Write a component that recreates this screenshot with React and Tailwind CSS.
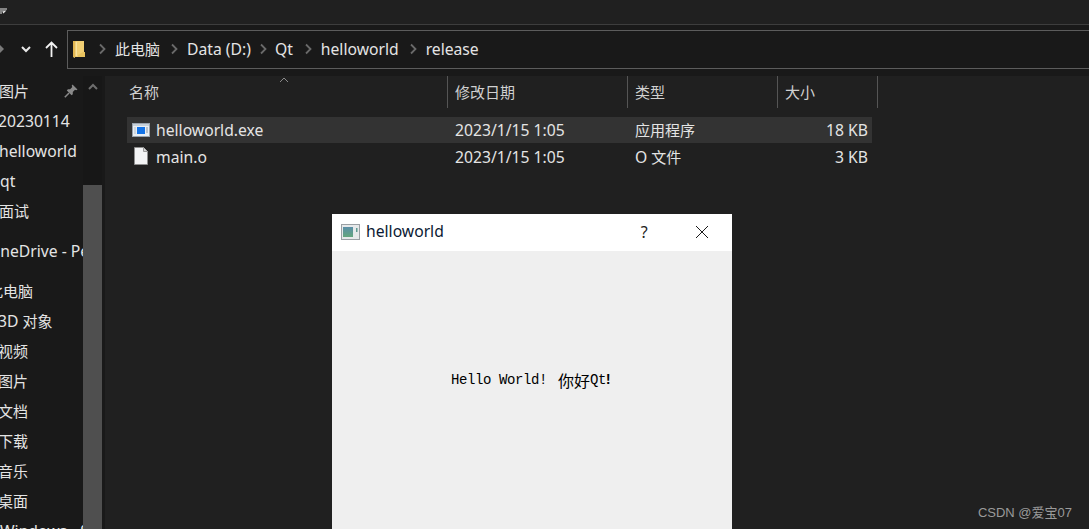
const FONT = "font-['Noto_Sans','Noto_Sans_CJK_SC',sans-serif]";
const CJK = "text-[15px]";

function Chevron() {
  return (
    <svg width="8" height="12" viewBox="0 0 8 12" className="shrink-0">
      <path d="M2 1.5 L6.5 6 L2 10.5" fill="none" stroke="#6a6a6a" strokeWidth="1.8" />
    </svg>
  );
}

function FolderIcon() {
  return (
    <svg width="12" height="17" viewBox="0 0 12 17" className="shrink-0">
      <path d="M0 0 H11 V11 H12 V16 H2 L2 17 L0 16 Z" fill="#f1cf74" />
      <path d="M3 1 V15" stroke="#fbe9ab" strokeWidth="1.5" />
      <path d="M0 0 H2.4 V16 H0 Z" fill="#e2b651" />
      <path d="M10 11 H12 V16 H5 V14 Z" fill="#e8c25e" />
    </svg>
  );
}

function ExeIcon() {
  return (
    <svg width="18" height="14" viewBox="0 0 18 14" className="shrink-0">
      <rect x="0.5" y="0.5" width="17" height="13" fill="#e9eef3" stroke="#9aa3ad" />
      <rect x="1" y="1" width="16" height="2" fill="#c7d0d8" />
      <rect x="5" y="4" width="8" height="7" fill="#1473e6" />
      <rect x="2" y="4" width="2" height="7" fill="#cfd6dd" />
      <path d="M14 5 H16 M14 7 H16 M14 9 H16" stroke="#8a96a3" strokeWidth="1" />
    </svg>
  );
}

function FileIcon() {
  return (
    <svg width="14" height="18" viewBox="0 0 14 18" className="shrink-0">
      <path d="M0.5 0.5 H9.5 L13.5 4.5 V17.5 H0.5 Z" fill="#f3f4f5" stroke="#8e8e8e" />
      <path d="M9.5 0.5 V4.5 H13.5" fill="#d5d5d5" stroke="#9a9a9a" />
    </svg>
  );
}

function PinIcon() {
  return (
    <svg width="14" height="14" viewBox="0 0 14 14" className="shrink-0">
      <path d="M8.5 0.5 L13.5 5.5 L12.2 6.3 L11 5.8 L8.8 8 L8.8 10.2 L7.6 11.3 L2.8 6.5 L3.9 5.3 L6.1 5.3 L8.3 3.1 L7.7 1.8 Z" fill="#8a8a8a" />
      <path d="M5 9 L0.8 13.2" stroke="#8a8a8a" strokeWidth="1.5" />
    </svg>
  );
}

const sidebarRows = [
  [<span className={CJK}>图片</span>, "-ml-[1px]", "h-[30px]"],
  ["20230114", "-ml-[2px]", "h-[30px]"],
  ["helloworld", "-ml-[1px]", "h-[30px]"],
  ["qt", "ml-0", "h-[30px]"],
  [<span className={CJK}>面试</span>, "-ml-[1px]", "h-[30px]"],
  ["OneDrive - Personal", "-ml-[12px]", "h-[50px]"],
  [<span className={CJK}>此电脑</span>, "-ml-[12px]", "h-[30px]"],
  [<>3D <span className={CJK}>对象</span></>, "-ml-[2px]", "h-[30px]"],
  [<span className={CJK}>视频</span>, "-ml-[2px]", "h-[30px]"],
  [<span className={CJK}>图片</span>, "-ml-[2px]", "h-[30px]"],
  [<span className={CJK}>文档</span>, "-ml-[2px]", "h-[30px]"],
  [<span className={CJK}>下载</span>, "-ml-[2px]", "h-[30px]"],
  [<span className={CJK}>音乐</span>, "-ml-[2px]", "h-[30px]"],
  [<span className={CJK}>桌面</span>, "-ml-[2px]", "h-[30px]"],
  ["Windows - SSD", "ml-0", "h-[30px]"],
];

const crumbs = [
  { t: "此电脑", c: "ml-[9px] mr-[10px] text-[15px]" },
  { t: "Data (D:)", c: "ml-[9px] mr-[8px]" },
  { t: "Qt", c: "ml-[8px] mr-[11px]" },
  { t: "helloworld", c: "ml-[9px] mr-[10px]" },
  { t: "release", c: "ml-[9px]" },
];

export default function App() {
  return (
    <div className={`${FONT} relative h-[529px] w-[1089px] overflow-hidden bg-[#202020] text-[15.7px] text-[#e4e4e4]`}>
      {/* top strip */}
      <div className="h-[25px] border-b border-[#3d3d3d] pt-[8px]">
        <svg width="8" height="8" viewBox="0 0 8 8" className="block">
          <path d="M0 1 H7 M0 3 H5 L3 5 M0 5 H2" stroke="#e8e8e8" strokeWidth="1.2" fill="none" />
        </svg>
      </div>

      {/* nav row */}
      <div className="flex h-[51px] items-start bg-[#191919] pt-[5px]">
        <div className="flex h-[38px] w-[67px] shrink-0 items-center">
          <svg width="4" height="8" viewBox="0 0 4 8" className="shrink-0">
            <path d="M0 0 L4 4 L0 8 Z" fill="#7a7a7a" />
          </svg>
          <svg width="10" height="7" viewBox="0 0 10 7" className="ml-[17px] shrink-0">
            <path d="M1 1 L5 5 L9 1" fill="none" stroke="#e8e8e8" strokeWidth="2" />
          </svg>
          <svg width="13" height="16" viewBox="0 0 13 16" className="ml-[14px] shrink-0">
            <path d="M6.5 16 V1.5 M1 7 L6.5 1.5 L12 7" fill="none" stroke="#f2f2f2" strokeWidth="1.8" />
          </svg>
        </div>
        <div className="flex h-[39px] flex-1 items-center border border-r-0 border-[#5c5c5c] pl-[5px]">
          <FolderIcon />
          <div className="ml-[13px] flex items-center">
            {crumbs.map((c) => (
              <div key={c.t} className="flex items-center">
                <Chevron />
                <span className={c.c}>{c.t}</span>
              </div>
            ))}
          </div>
        </div>
      </div>

      {/* main */}
      <div className="flex h-[453px]">
        {/* sidebar */}
        <div className="flex w-[105px] shrink-0 bg-[#191919]">
          <div className="w-[83px] shrink-0 overflow-hidden">
            {sidebarRows.map(([t, ml, h], i) => (
              <div key={i} className={`relative flex ${h} items-center whitespace-nowrap`}>
                <span className={`${ml} pt-[2px]`}>{t}</span>
                {i === 0 && (
                  <span className="absolute right-[5px] top-[8px]">
                    <PinIcon />
                  </span>
                )}
              </div>
            ))}
          </div>
          <div className="flex w-[19px] shrink-0 flex-col bg-[#171717]">
            <div className="flex h-[109px] justify-center pt-[7px]">
              <svg width="10" height="7" viewBox="0 0 10 7">
                <path d="M1 6 L5 2 L9 6" fill="none" stroke="#6e6e6e" strokeWidth="2" />
              </svg>
            </div>
            <div className="flex-1 bg-[#4f4f4f]" />
          </div>
          <div className="w-[3px] shrink-0 bg-[#191919]" />
        </div>

        {/* file list */}
        <div className="flex-1 pl-[22px]">
          <div className="relative grid h-[32px] w-[751px] grid-cols-[321px_180px_150px_100px] items-stretch text-[15px] text-[#d0d0d0]">
            <div className="flex items-center border-r border-[#555555] pl-[2px]">名称</div>
            <div className="flex items-center border-r border-[#555555] pl-[7px]">修改日期</div>
            <div className="flex items-center border-r border-[#555555] pl-[7px]">类型</div>
            <div className="flex items-center border-r border-[#555555] pl-[7px]">大小</div>
            <svg width="10" height="6" viewBox="0 0 10 6" className="absolute left-[152px] top-[1px]">
              <path d="M1 5 L5 1 L9 5" fill="none" stroke="#8a8a8a" strokeWidth="1" />
            </svg>
          </div>
          <div className="mt-[9px] w-[745px]">
            <div className="grid h-[26px] grid-cols-[320px_180px_150px_95px] items-center bg-[#333333]">
              <div className="flex items-center pl-[5px]">
                <ExeIcon />
                <span className="ml-[6px] pt-[2px]">helloworld.exe</span>
              </div>
              <div className="pl-[8px] pt-[2px]">2023/1/15 1:05</div>
              <div className={`pl-[8px] ${CJK}`}>应用程序</div>
              <div className="pr-[4px] pt-[2px] text-right">18 KB</div>
            </div>
            <div className="grid h-[26px] grid-cols-[320px_180px_150px_95px] items-center">
              <div className="flex items-center pl-[7px]">
                <FileIcon />
                <span className="ml-[8px] pt-[3px]">main.o</span>
              </div>
              <div className="pl-[8px] pt-[3px]">2023/1/15 1:05</div>
              <div className="pl-[8px] pt-[3px]">
                O <span className={CJK}>文件</span>
              </div>
              <div className="pr-[4px] pt-[3px] text-right">3 KB</div>
            </div>
          </div>
        </div>
      </div>

      {/* floating Qt window */}
      <div className="absolute left-[332px] top-[214px] flex h-[315px] w-[400px] flex-col bg-[#efefef]">
        <div className="flex h-[37px] shrink-0 items-center bg-white pb-[1px] pl-[9px] text-[#0b1a33]">
          <svg width="19" height="16" viewBox="0 0 19 16" className="shrink-0">
            <rect x="0.5" y="0.5" width="18" height="15" fill="#e6e9ea" stroke="#9aa0a4" />
            <defs>
              <linearGradient id="qtg" x1="0" y1="0" x2="0" y2="1">
                <stop offset="0" stopColor="#5b8fa8" />
                <stop offset="1" stopColor="#63a67d" />
              </linearGradient>
            </defs>
            <rect x="2" y="3" width="10" height="10" fill="url(#qtg)" />
            <rect x="15" y="4" width="1.5" height="4" fill="#5f9a90" />
          </svg>
          <span className="ml-[6px]">helloworld</span>
          <span className="ml-[197px] text-[16px] text-[#222222]">?</span>
          <svg width="14" height="14" viewBox="0 0 14 14" className="ml-[47px] shrink-0">
            <path d="M1 1 L13 13 M13 1 L1 13" stroke="#1a1a1a" strokeWidth="1" />
          </svg>
        </div>
        <div className="flex items-center whitespace-nowrap pl-[119px] pt-[119px] font-['Liberation_Mono','Noto_Sans_CJK_SC',monospace] text-[14px] leading-[20px] tracking-[-0.4px] text-black">
          <span className="whitespace-pre">Hello World! </span>
          <span className="ml-[3px] font-['Noto_Sans_CJK_SC',sans-serif] text-[16px] tracking-normal">你好</span>
          <span>Qt</span>
          <span className="-ml-[2px] font-bold">!</span>
        </div>
      </div>

      {/* watermark */}
      <div className="absolute bottom-[7px] right-[17px] font-['Liberation_Sans','Noto_Sans_CJK_SC',sans-serif] text-[13px] text-[#9a9a9a]">
        CSDN @爱宝07
      </div>
    </div>
  );
}
